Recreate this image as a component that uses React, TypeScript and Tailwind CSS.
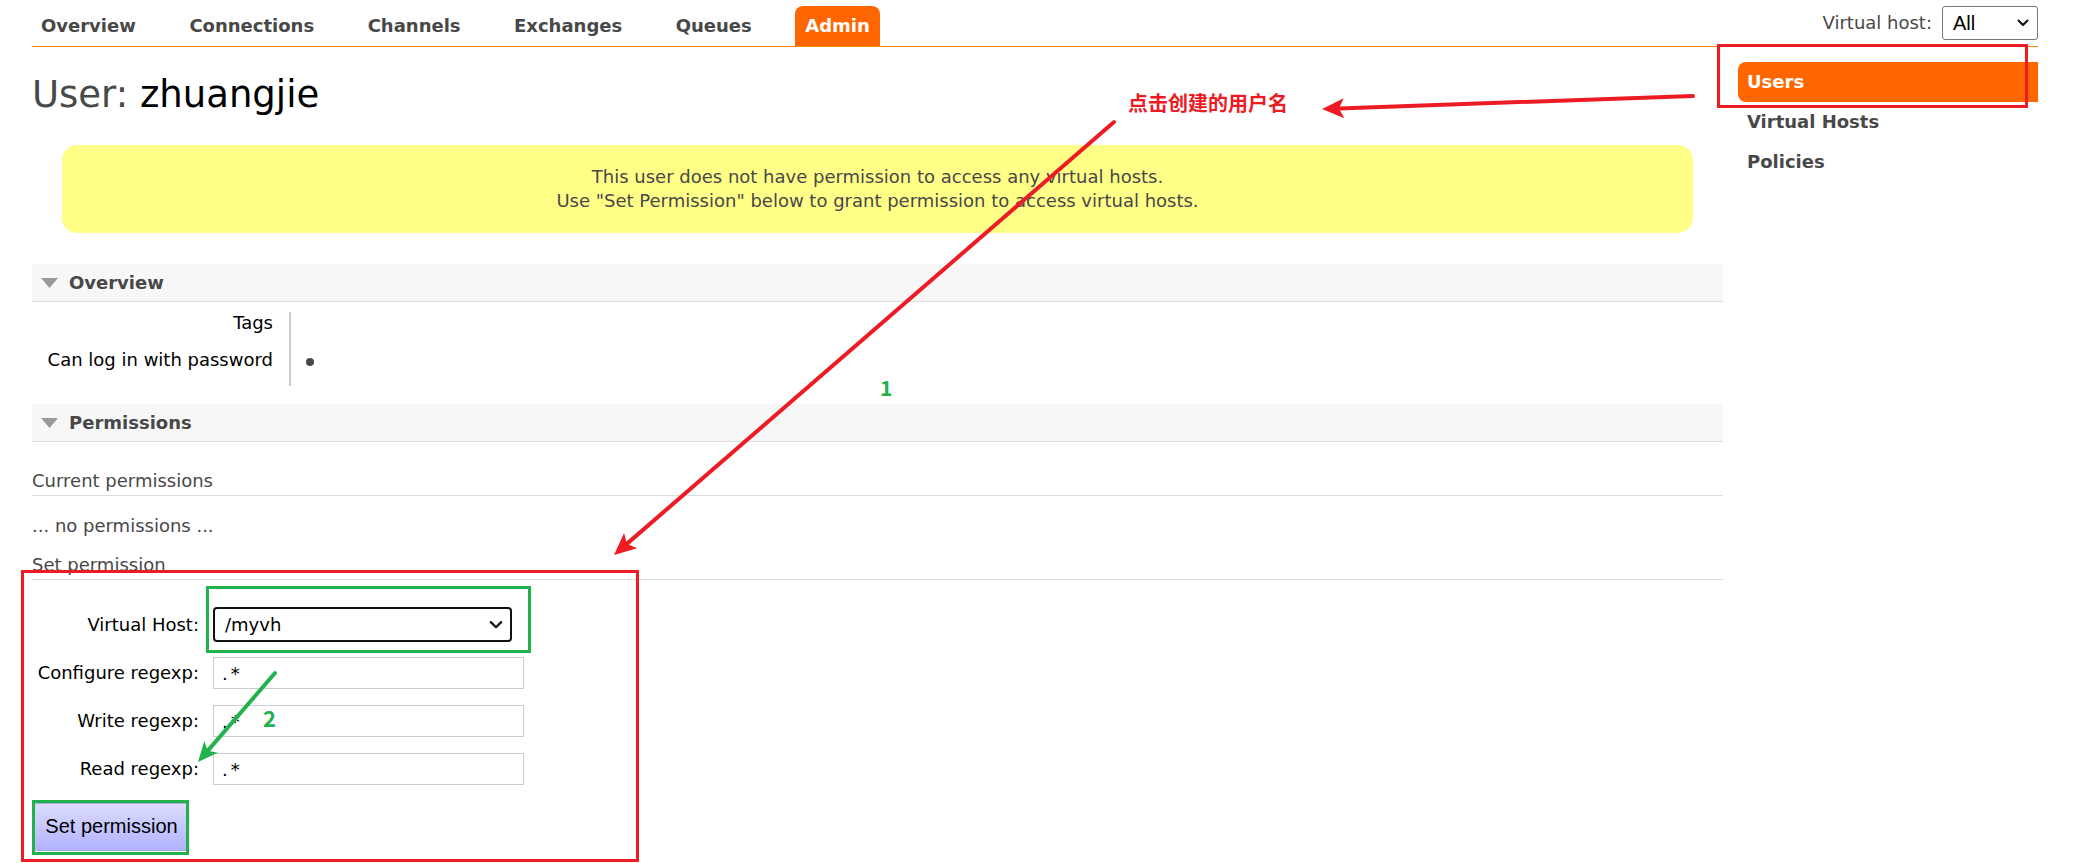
import React from 'react';

const tabs = ['Overview', 'Connections', 'Channels', 'Exchanges', 'Queues', 'Admin'];

type ArrowProps = { x1: number; y1: number; x2: number; y2: number; color: string; w?: number; head?: number; hw?: number };

// straight annotation arrow with a notched head
function Arrow({ x1, y1, x2, y2, color, w = 4, head = 22, hw = 10 }: ArrowProps) {
  const dx = x2 - x1;
  const dy = y2 - y1;
  const len = Math.hypot(dx, dy);
  const ux = dx / len;
  const uy = dy / len;
  const bx = x2 - ux * head;
  const by = y2 - uy * head;
  const px = -uy * hw;
  const py = ux * hw;
  const nx = bx + ux * 5;
  const ny = by + uy * 5;
  return (
    <g>
      <line x1={x1} y1={y1} x2={nx} y2={ny} stroke={color} strokeWidth={w} strokeLinecap="round" />
      <polygon points={`${x2},${y2} ${bx + px},${by + py} ${nx},${ny} ${bx - px},${by - py}`} fill={color} />
    </g>
  );
}

const Chevron = ({ size = 14 }: { size?: number }) => (
  <svg width={size} height={size} viewBox="0 0 14 14" fill="none">
    <path d="M2.5 4.5 L7 9 L11.5 4.5" stroke="#111" strokeWidth="2" strokeLinecap="round" strokeLinejoin="round" />
  </svg>
);

const SectionHeader = ({ title }: { title: string }) => (
  <div className="flex h-[38px] items-center border-b border-[#ddd] bg-[#f7f7f7] pl-[9px]">
    <svg width="17" height="10" viewBox="0 0 17 10">
      <polygon points="0,0 17,0 8.5,10" fill="#999" />
    </svg>
    <span className="ml-[11px] font-bold text-[#484848]">{title}</span>
  </div>
);

const Field = ({ label }: { label: string }) => (
  <div className="flex items-center">
    <div className="w-[167px] text-right">{label}</div>
    <input
      readOnly
      value=".*"
      className="ml-[14px] h-[32px] w-[311px] border border-[#ccc] bg-white pl-[8px] font-['DejaVu_Sans',sans-serif] text-[18px] tracking-[3px] text-black outline-none"
    />
  </div>
);

export default function App() {
  return (
    <div className="relative h-[863px] w-[2096px] overflow-hidden bg-white font-['DejaVu_Sans',sans-serif] text-[18px] leading-[22px] text-black">
      <div className="ml-[32px] w-[2006px]">
        {/* Top nav */}
        <header className="flex h-[47px] items-end justify-between border-b border-[#f80]">
          <nav className="-ml-px flex gap-[33.5px]">
            {tabs.map((t) => (
              <div
                key={t}
                className={`flex h-[40px] items-center px-[10px] font-bold ${
                  t === 'Admin' ? 'rounded-t-[8px] bg-[#f60] text-white' : 'text-[#484848]'
                }`}
              >
                {t}
              </div>
            ))}
          </nav>
          <div className="mt-[6px] flex items-center gap-[10px] self-start">
            <span className="text-[#484848]">Virtual host:</span>
            <div className="flex h-[34px] w-[96px] items-center justify-between rounded-[3px] border border-[#767676] pl-[10px] pr-[7px] font-['Liberation_Sans',sans-serif] text-[20px]">
              <span>All</span>
              <Chevron />
            </div>
          </div>
        </header>

        <div className="flex">
          {/* Main column */}
          <main className="w-[1691px]">
            <h1 className="mt-[30px] text-[37px] leading-[36px] text-[#484848]">
              User: <span className="text-black">zhuangjie</span>
            </h1>

            <div className="mx-[30px] mt-[32px] flex h-[88px] flex-col items-center justify-center rounded-[15px] bg-[#ff8] leading-[24px] text-[#484848]">
              <p>This user does not have permission to access any virtual hosts.</p>
              <p>Use "Set Permission" below to grant permission to access virtual hosts.</p>
            </div>

            <div className="mt-[31px]">
              <SectionHeader title="Overview" />
              <div className="mt-[10px] flex">
                <div className="w-[257px] pr-[16px] text-right">
                  <div className="h-[37px]">Tags</div>
                  <div className="h-[37px]">Can log in with password</div>
                </div>
                <div className="border-l-2 border-[#ccc] pl-[15px]">
                  <div className="h-[37px]" />
                  <div className="h-[37px] pt-[9px]">
                    <div className="h-[8px] w-[8px] rounded-full bg-[#484848]" />
                  </div>
                </div>
              </div>
            </div>

            <div className="mt-[18px]">
              <SectionHeader title="Permissions" />
              <h3 className="mt-[28px] border-b border-[#ddd] pb-[3px] text-[#484848]">Current permissions</h3>
              <p className="mt-[19px] text-[#484848]">... no permissions ...</p>
              <h3 className="mt-[17px] border-b border-[#ddd] pb-[3px] text-[#484848]">Set permission</h3>

              <div className="mt-[27px] flex items-center">
                <div className="w-[167px] text-right">Virtual Host:</div>
                <div className="ml-[14px] flex h-[35px] w-[299px] items-center justify-between rounded-[4px] border-2 border-[#111] pl-[10px] pr-[6px]">
                  <span>/myvh</span>
                  <Chevron size={16} />
                </div>
              </div>
              <div className="mt-[15px] flex flex-col gap-[16px]">
                <Field label="Configure regexp:" />
                <Field label="Write regexp:" />
                <Field label="Read regexp:" />
              </div>
              <button className="ml-[2px] mt-[18px] h-[48px] w-[155px] rounded-[3px] border border-[#a8a8d8] bg-linear-to-b from-[#dcdcff] to-[#b2b2ff] pb-[3px] font-['Liberation_Sans',sans-serif] text-[20px] text-black">
                Set permission
              </button>
            </div>
          </main>

          {/* Right hand menu */}
          <aside className="ml-[15px] mt-[15px] w-[300px] font-bold text-[#484848]">
            <div className="flex h-[40px] items-center rounded-l-[8px] bg-[#f60] pl-[9px] text-white">Users</div>
            <div className="flex h-[40px] items-center pl-[9px]">Virtual Hosts</div>
            <div className="flex h-[40px] items-center pl-[9px]">Policies</div>
          </aside>
        </div>
      </div>

      {/* Screenshot annotations */}
      <div className="pointer-events-none absolute left-[1717px] top-[44px] h-[64px] w-[311px] border-[3px] border-[#ed1c24]" />
      <div className="pointer-events-none absolute left-[21px] top-[570px] h-[292px] w-[618px] border-[3px] border-[#ed1c24]" />
      <div className="pointer-events-none absolute left-[206px] top-[586px] h-[67px] w-[325px] border-[3px] border-[#22b14c]" />
      <div className="pointer-events-none absolute left-[32px] top-[800px] h-[55px] w-[157px] border-[3px] border-[#22b14c]" />

      <span className="absolute left-[1128px] top-[91px] font-['Noto_Sans_CJK_SC',sans-serif] text-[20px] font-bold leading-[24px] text-[#ed1c24]">
        点击创建的用户名
      </span>
      <span className="absolute left-[880px] top-[375px] font-['Noto_Sans_CJK_SC',sans-serif] text-[21px] font-bold leading-[24px] text-[#22b14c]">
        1
      </span>
      <span className="absolute left-[263px] top-[705px] font-['Noto_Sans_CJK_SC',sans-serif] text-[22px] font-bold leading-[24px] text-[#22b14c]">
        2
      </span>

      <svg className="pointer-events-none absolute left-0 top-0" width="2096" height="863">
        <Arrow x1={1693} y1={96} x2={1322} y2={109} color="#ed1c24" />
        <Arrow x1={1114} y1={122} x2={614} y2={555} color="#ed1c24" />
        <Arrow x1={275} y1={673} x2={198} y2={762} color="#22b14c" head={20} hw={9} />
      </svg>
    </div>
  );
}
